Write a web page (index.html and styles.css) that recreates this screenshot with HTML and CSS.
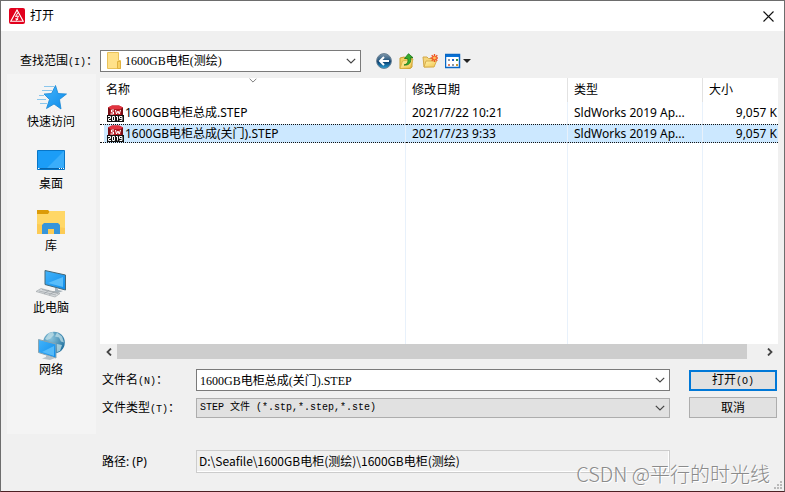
FILE: index.html
```html
<!DOCTYPE html>
<html lang="zh-CN">
<head>
<meta charset="utf-8">
<meta name="viewport" content="width=device-width, initial-scale=1">
<title>打开</title>
<link rel="stylesheet" href="styles.css">
</head>
<body>
<svg width="0" height="0" class="defs" aria-hidden="true">
  <defs>
    <linearGradient id="blue" x1="0" y1="0" x2="1" y2="1"><stop offset="0" stop-color="#43b4fb"/><stop offset="1" stop-color="#0d8bea"/></linearGradient>
    <linearGradient id="yellow" x1="0" y1="0" x2="1" y2="1"><stop offset="0" stop-color="#fff3ad"/><stop offset="1" stop-color="#f3c64d"/></linearGradient>
    <linearGradient id="ball" x1="0" y1="0" x2="0" y2="1"><stop offset="0" stop-color="#8299ae"/><stop offset=".45" stop-color="#29597f"/><stop offset=".55" stop-color="#0b3e6d"/><stop offset="1" stop-color="#2aa5dc"/></linearGradient>
    <radialGradient id="globe" cx=".35" cy=".3" r=".75"><stop offset="0" stop-color="#8dc5dc"/><stop offset="1" stop-color="#21719f"/></radialGradient>
    <symbol id="chevron" viewBox="0 0 10 6"><path d="M.8.8 5 5 9.200.8" fill="none" stroke="#444" stroke-width="1.2"/></symbol>
    <symbol id="sw" viewBox="0 0 17 17">
      <path d="M1 2.500 5 .5h7l4 2V11H1z" fill="#b51a22"/><path d="M1 2.500 5 .5h7l4 2-2.500 1.500H3.500z" fill="#e23440"/>
      <path d="M1 2.500V11h2V4zM16 2.500V11h-2V4z" fill="#771017"/>
      <path d="M7 5H4.500v2h2v2H3.500M8.500 5l1 4L11 6l1.200 3L13.500 5" fill="none" stroke="#fff" stroke-width="1"/>
      <path d="M0 10h17v7H0z" fill="#111"/>
      <path d="M1 11.500h2.500v2h-2v2H4M5.500 11.500h2v4h-2zM9 11.500h1.500v4M15 13.500h-2.500v-2h2.500v4h-2.500" fill="none" stroke="#fff" stroke-width="1"/>
    </symbol>
  </defs>
</svg>
<main class="dialog">
  <header class="titlebar">
    <svg class="logo" viewBox="0 0 16 16" width="16" height="16"><rect width="16" height="16" rx="2" fill="#e2001d"/><path d="M8 2 1.800 13.200h12.400z" fill="none" stroke="#fff" stroke-width="1.100"/><path d="M9 4.500 6.500 8.500 9.500 8 7.500 12M7 10l.3 2.300L9.300 11" fill="none" stroke="#fff" stroke-width="1"/></svg>
    <h1>打开</h1>
    <button class="close" type="button" aria-label="关闭"><svg viewBox="0 0 11 11" width="11" height="11"><path d="M.5.5l10 10M10.500.5l-10 10" stroke="#111" stroke-width="1.100"/></svg></button>
  </header>

  <div class="lookup">
    <label class="song" for="folder">查找范围<span class="key">(I)</span>：</label>
    <div class="combo folder-combo">
      <svg class="folder" viewBox="0 0 14 17" width="14" height="17"><path d="M.5.5h11v8h2v8H.5z" fill="#ffe18a" stroke="#e9c25a"/><path d="M10.500 9.500h3v7h-3z" fill="#f8d064" stroke="#dfb140"/></svg>
      <select id="folder" class="song"><option>1600GB电柜(测绘)</option></select>
      <svg class="arrow" width="10" height="6"><use href="#chevron"/></svg>
    </div>
    <div class="tools">
      <button type="button" aria-label="后退"><svg viewBox="0 0 16 16" width="16" height="16"><circle cx="8" cy="8" r="7.400" fill="url(#ball)" stroke="#687f92"/><path d="M13 8H4M8 4 4 8l4 4" fill="none" stroke="#fff" stroke-width="2"/></svg></button>
      <button type="button" aria-label="向上一级"><svg viewBox="0 0 16 16" width="16" height="16"><path d="M1 5l4-1 2 1 6-1v10l-2 1.500H1z" fill="#f3cf5f" stroke="#c99e30"/><path d="M3.500 8 14 6l-2.500 9L1 15.500z" fill="url(#yellow)" stroke="#d6ab3a" stroke-width=".8"/><path d="M5 12c4-1 4.500-4 3.500-6.500H5.500L9.500.7l4.500 4h-2.500c1 4-1 8-6.500 7.300z" fill="#35ad2e" stroke="#187318" stroke-width=".8"/></svg></button>
      <button type="button" aria-label="新建文件夹"><svg viewBox="0 0 16 16" width="16" height="16"><path d="M1 4h4l1.500 1.500H12v8L2 14z" fill="#f4d57a" stroke="#d3a849"/><path d="M4 8h10.500L12 14H2z" fill="url(#yellow)" stroke="#d7ae4d"/><path d="M12.500 1v8M8.500 5h8M9.700 2.200l5.600 5.600M15.300 2.200 9.700 7.800" stroke="#ef5423" stroke-width="1.400"/><circle cx="12.500" cy="5" r="1.400" fill="#ffc55b"/></svg></button>
      <button type="button" class="view" aria-label="查看"><svg viewBox="0 0 26 16" width="26" height="16"><path d="M.5 1.500h14v13H.5z" fill="#fff" stroke="#0867c5"/><path d="M0 1h15v3H0z" fill="#0873d9"/><path d="M.5 1.500h14v13H.5z" fill="none" stroke="#0867c5" stroke-width="1.500"/><path d="M3 6h2v2H3zM7 11h2v2H7z" fill="#8b97a8"/><path d="M7 6h2v2H7z" fill="#2465c9"/><path d="M11 6h2v2h-2z" fill="#338b44"/><path d="M3 11h2v2H3z" fill="#e18261"/><path d="M11 11h2v2h-2z" fill="#c79a2e"/><path d="M18 6h8l-4 4z" fill="#222"/></svg></button>
    </div>
  </div>

  <div class="content">
    <nav class="places">
      <a href="#"><svg viewBox="0 0 32 32" width="32" height="32"><path d="M20.500 3.500l2.500 8 8.500.5-7 5.500 1.500 9.500-7-5-7.500 4.500 3-9-5.500-5.500 7.500-.5z" fill="url(#blue)" stroke="#1586d5" stroke-width=".8"/><path d="M9 4.500h10M7 8.500h10M4 13.500h5M2 17.500h9M5 21.500h7" stroke="#8ac6ec" stroke-width="1"/></svg>快速访问</a>
      <a href="#"><svg viewBox="0 0 32 32" width="32" height="32"><path d="M2.500 6.500h27v19h-27z" fill="#1b9df7" stroke="#0876c7"/><path d="M29 7v17L12 24z" fill="#3aadfa"/><path d="M3 24.500h26" stroke="#0864aa"/><path d="M3 24.500h1.500M24 24.500h1M26 24.500h1M28 24.500h1" stroke="#fff"/></svg>桌面</a>
      <a href="#"><svg viewBox="0 0 32 32" width="32" height="32"><path d="M2 4h11l2 2-2 3H2z" fill="#dc9b08"/><path d="M2 8h11l2-3h15v23H2z" fill="#ffd766"/><path d="M2 28V18l28 4v6z" fill="#fccb55"/><path d="M7 28V19l2-2h14l2 2v9h-6v-5h-6v5z" fill="#3695db"/></svg>库</a>
      <a href="#"><svg viewBox="0 0 32 32" width="32" height="32"><path d="M10 2.500 30.500 7v15L10 16.500z" fill="url(#blue)" stroke="#466878"/><path d="M28 9v10L13 15z" fill="#59bdfa"/><path d="M20 20v3l-5 1 8 1 5-2-5-1v-2z" fill="#a7b3bb"/><path d="M1 23.500 6 20.500l19 5-5 3.500z" fill="#d6dadd" stroke="#a2a7aa" stroke-width=".7"/><path d="M4 23l17 4M7 21.500l16 4M9 26l5-4M14 27l5-3" stroke="#92999d" stroke-width=".6"/></svg>此电脑</a>
      <a href="#"><svg viewBox="0 0 32 32" width="32" height="32"><circle cx="19" cy="12.500" r="10.800" fill="url(#globe)"/><path d="M10 9l4-6 4-1 1 3-4 4-3 1zM22 2.500l5 4 2 6-3-1-2-4-4-1zM22 14l5 1-2 6-3 1z" fill="#c1e0e8" opacity=".75"/><path d="M3.500 9.500 21 14v14L3.500 22.500z" fill="url(#blue)" stroke="#8ba5b0"/><path d="M19 16v10L7 22z" fill="#54baf9"/><path d="M11 25v2l-4 1.500 8 1.500 5-2-5-1.500z" fill="#b6c1c8"/></svg>网络</a>
    </nav>

    <div class="work">
      <section class="list">
        <table>
          <colgroup><col><col class="c-date"><col class="c-type"><col class="c-size"></colgroup>
          <thead><tr><th class="sorted">名称<svg class="sort" width="8" height="5" viewBox="0 0 10 6"><use href="#chevron"/></svg></th><th>修改日期</th><th>类型</th><th>大小</th></tr></thead>
          <tbody>
            <tr><td><span class="file"><svg width="17" height="17"><use href="#sw"/></svg>1600GB电柜总成.STEP</span></td><td>2021/7/22 10:21</td><td>SldWorks 2019 Ap...</td><td class="size">9,057 K</td></tr>
            <tr class="selected"><td><span class="file"><svg width="17" height="17"><use href="#sw"/></svg>1600GB电柜总成(关门).STEP</span></td><td>2021/7/23 9:33</td><td>SldWorks 2019 Ap...</td><td class="size">9,057 K</td></tr>
            <tr class="rest"><td></td><td></td><td></td><td></td></tr>
          </tbody>
        </table>
      </section>
      <div class="scroll">
        <button type="button" aria-label="向左滚动"><svg viewBox="0 0 6 8" width="6" height="8"><path d="M5 .5 1.500 4 5 7.500" fill="none" stroke="#444" stroke-width="1.800"/></svg></button>
        <div class="track"><div class="thumb"></div></div>
        <button type="button" aria-label="向右滚动"><svg viewBox="0 0 6 8" width="6" height="8"><path d="M1 .5 4.500 4 1 7.500" fill="none" stroke="#444" stroke-width="1.800"/></svg></button>
      </div>
      <form class="form">
        <label class="song" for="name">文件名<span class="key">(N)</span>：</label>
        <div class="combo"><input id="name" class="song" type="text" value="1600GB电柜总成(关门).STEP"><svg class="arrow" width="10" height="6"><use href="#chevron"/></svg></div>
        <button type="button" class="btn primary song">打开<span class="key">(O)</span></button>
        <label class="song" for="type">文件类型<span class="key">(T)</span>：</label>
        <div class="combo grey"><select id="type" class="mono"><option>STEP 文件 (*.stp,*.step,*.ste)</option></select><svg class="arrow" width="10" height="6"><use href="#chevron"/></svg></div>
        <button type="button" class="btn song">取消</button>
        <label class="path-label" for="path">路径: (P)</label>
        <input id="path" class="path" type="text" readonly value="D:\Seafile\1600GB电柜(测绘)\1600GB电柜(测绘)">
      </form>
    </div>
  </div>
  <svg class="grip" viewBox="0 0 9 9" width="9" height="9"><path d="M6 0h2v2H6zM3 3h2v2H3zM6 3h2v2H6zM0 6h2v2H0zM3 6h2v2H3zM6 6h2v2H6z" fill="#b9b9b9"/></svg>
  <div class="watermark">CSDN @平行的时光线</div>
</main>
</body>
</html>
```
FILE: styles.css
```css
* { box-sizing: border-box; }

body {
  margin: 0;
  color: #000;
  font: 12px/16px "Noto Sans", "Noto Sans CJK SC", sans-serif;
}

button, input, select { font: inherit; color: inherit; }
button { padding: 0; border: 0; background: none; }
svg { flex: none; }
.defs { position: absolute; }

.song { font-family: "Liberation Serif", "Noto Sans CJK SC", serif; }
.key { font: 10px/12px "Liberation Mono", monospace; }
.combo .mono { font: 10px/18px "Liberation Mono", "Noto Sans CJK SC", monospace; }

.dialog {
  position: relative;
  min-height: 100vh;
  border: 1px solid #6d6d6d;
  border-bottom-color: #4b2023;
  background: #f0f0f0;
}

.titlebar {
  display: flex;
  align-items: center;
  gap: 5px;
  height: 30px;
  padding: 0 10px 0 8px;
  background: #fff;
}
.titlebar h1 { flex: 1; margin: 0; font-size: 12px; font-weight: 400; }
.close { display: flex; }

.lookup {
  display: flex;
  align-items: center;
  height: 43px;
  padding: 16px 6px 0 19px;
}
.lookup > label { width: 80px; white-space: nowrap; }

.combo {
  display: flex;
  position: relative;
  align-items: center;
  height: 22px;
  border: 1px solid #7a7a7a;
  background: #fff;
}
.combo input, .combo select {
  flex: 1;
  min-width: 0;
  height: 100%;
  padding: 0 20px 0 3px;
  border: 0;
  outline: 0;
  background: transparent;
  appearance: none;
}
.combo .arrow { position: absolute; right: 4px; pointer-events: none; }
.folder-combo { flex: 0 1 261px; padding-left: 6px; }
.folder-combo select { padding-left: 4px; }
.combo.grey { height: 20px; border-color: #adadad; background: #e1e1e1; }

.tools { display: flex; gap: 7px; margin-left: 15px; }
.tools button { display: flex; }

.content {
  display: grid;
  grid-template-columns: 89px minmax(0, 1fr);
  gap: 4px;
  padding: 0 6px;
}

.places {
  display: flex;
  flex-direction: column;
  align-self: start;
  gap: 14px;
  padding: 8px 1px 56px 0;
  background: #f4f4f4;
}
.places a {
  display: flex;
  flex-direction: column;
  align-items: center;
  color: #000;
  text-decoration: none;
}

.work { padding-top: 4px; }
.list { overflow: hidden; background: #fff; }
table {
  width: 100%;
  border-collapse: separate;
  border-spacing: 0;
  table-layout: fixed;
  white-space: nowrap;
}
.c-date { width: 162px; }
.c-type { width: 135px; }
.c-size { width: 75px; }
th {
  position: relative;
  height: 24px;
  padding: 0 6px;
  border-right: 1px solid #e2e2e2;
  font-weight: 400;
  text-align: left;
}
td { height: 22px; padding: 0 6px; border-right: 1px solid #e8f1fb; }
th:last-child, td:last-child { border-right: 0; }
.sort { position: absolute; top: 0; left: 49%; opacity: .7; }
.file { display: flex; align-items: center; gap: 1px; padding-left: 1px; }
td.size { padding: 0 1px 0 0; text-align: right; }
.selected td {
  height: 19px;
  border-top: 1px dotted #111;
  border-bottom: 1px dotted #111;
  background: #cce8ff;
}
.selected td:first-child {
  background: linear-gradient(90deg, #fff 4px, #cce8ff 4px);
}
.rest td { height: 201px; }

.scroll { display: flex; height: 15px; }
.scroll button { display: flex; align-items: center; justify-content: center; width: 17px; }
.track { flex: 1; padding-right: 14px; }
.thumb { height: 100%; background: #cdcdcd; }

.form {
  display: grid;
  grid-template-columns: 94px minmax(0, 1fr) 88px;
  align-items: center;
  row-gap: 6px;
  padding: 10px 1px 0 2px;
}
.form .combo { margin-right: 19px; }
.btn { height: 21px; border: 1px solid #adadad; background: #e1e1e1; }
.btn.primary { border: 2px solid #0078d7; }
.path-label, .path { margin-top: 26px; }
.path {
  min-width: 0;
  height: 23px;
  margin-right: 19px;
  padding: 0 2px 3px;
  border: 1px solid #ccc;
  outline: 0;
  background: #f0f0f0;
  box-shadow: inset -1px -1px #fff;
  font-family: "Liberation Sans Narrow", "Noto Sans CJK SC", sans-serif;
}

.grip { position: absolute; right: 1px; bottom: 1px; }
.watermark {
  position: absolute;
  right: 14px;
  bottom: 4px;
  color: #8b8b8b;
  font-family: "Noto Sans CJK SC", sans-serif;
  font-size: 20px;
  font-weight: 300;
  line-height: 26px;
  text-shadow: 1px 1px #fff;
  pointer-events: none;
}
```
